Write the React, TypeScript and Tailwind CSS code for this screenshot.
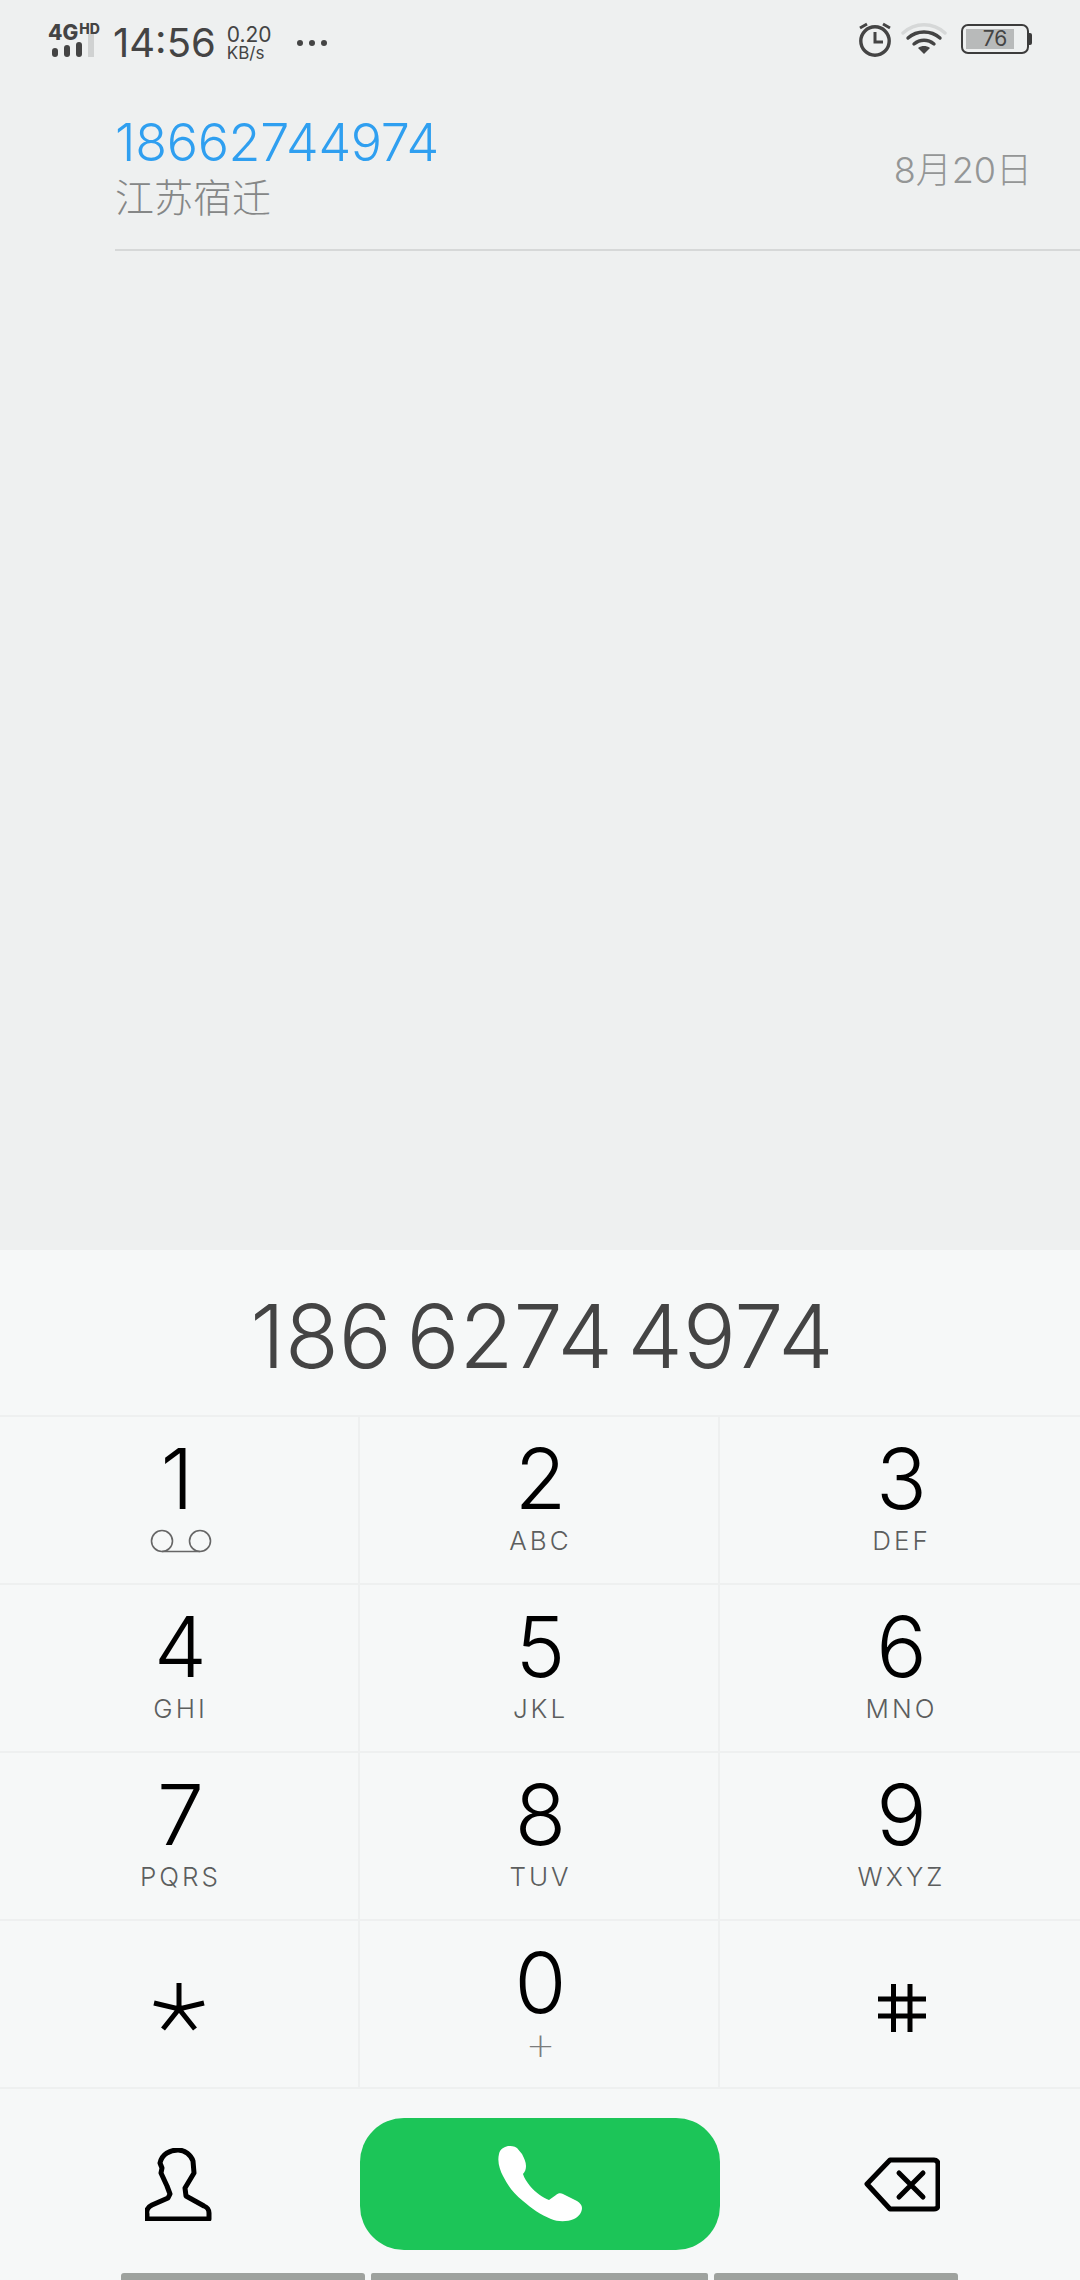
const sans = { fontFamily: '"Inter", "Noto Sans CJK SC", sans-serif' };

const keys = [
  { n: "1", l: "" },
  { n: "2", l: "ABC" },
  { n: "3", l: "DEF" },
  { n: "4", l: "GHI" },
  { n: "5", l: "JKL" },
  { n: "6", l: "MNO" },
  { n: "7", l: "PQRS" },
  { n: "8", l: "TUV" },
  { n: "9", l: "WXYZ" },
];

function Voicemail() {
  return (
    <svg width="62" height="24" viewBox="0 0 62 24" fill="none" stroke="#666" strokeWidth="1.6">
      <circle cx="12" cy="12" r="10.5" />
      <circle cx="50" cy="12" r="10.5" />
      <path d="M12 22.5h38" />
    </svg>
  );
}

function Signal() {
  return (
    <div className="mt-[3px] flex w-[52px] flex-col text-[#444]">
      <div className="flex h-[17px] items-start">
        <span className="text-[21px] leading-[17px] font-extrabold">4G</span>
        <span className="ml-[1px] text-[14px] leading-[10px] font-extrabold">HD</span>
      </div>
      <div className="mt-[-7px] flex h-[23px] items-end gap-[6px] pl-[4px]">
        <div className="h-[9px] w-[6px] rounded-[3px] bg-[#444]" />
        <div className="h-[12px] w-[6px] rounded-[3px] bg-[#444]" />
        <div className="h-[15px] w-[6px] rounded-[3px] bg-[#444]" />
        <div className="h-[23px] w-[6px] bg-[#d0d2d2]" />
      </div>
    </div>
  );
}

function Alarm() {
  return (
    <svg width="34" height="36" viewBox="0 0 34 36" fill="none" stroke="#444" strokeWidth="3.4">
      <circle cx="17" cy="20" r="14.2" />
      <path d="M17 11v10h8" strokeWidth="3" />
      <path d="M2 7l7-4M32 7l-7-4" strokeWidth="3" />
    </svg>
  );
}

function Wifi() {
  return (
    <svg width="46" height="34" viewBox="0 0 46 34" fill="none" strokeLinecap="round">
      <path d="M2 11C14 0 32 0 44 11" stroke="#d6d8d8" strokeWidth="3.4" />
      <path d="M7 16c9-8 23-8 32 0" stroke="#444" strokeWidth="3.4" />
      <path d="M13 22c6-5 14-5 20 0" stroke="#444" strokeWidth="3.4" />
      <path d="M17 26c4-2.6 8-2.6 12 0l-6 6z" fill="#444" />
    </svg>
  );
}

function Battery() {
  return (
    <div className="flex items-center">
      <div className="relative flex h-[30px] w-[68px] items-center rounded-[7px] border-[2px] border-[#3c3c3c] pl-[3px]">
        <div className="h-[20px] w-[48px] bg-[#b8baba]" />
        <span className="absolute inset-0 text-center text-[21px] leading-[26px] text-[#444]">76</span>
      </div>
      <div className="h-[12px] w-[3px] rounded-r-[2px] bg-[#3c3c3c]" />
    </div>
  );
}

function StatusBar() {
  return (
    <div className="flex h-[84px] items-start pt-[21px] pr-[48px] pl-[48px]">
      <Signal />
      <span className="ml-[13px] text-[40px] leading-[44px] text-[#444]">14:56</span>
      <div className="mt-[3px] ml-[11px] flex flex-col text-[#444]">
        <span className="text-[21px] leading-[21px]">0.20</span>
        <span className="text-[17px] leading-[17px]">KB/s</span>
      </div>
      <div className="mt-[19px] ml-[25px] flex gap-[6px]">
        <div className="h-[6px] w-[6px] rounded-full bg-[#444]" />
        <div className="h-[6px] w-[6px] rounded-full bg-[#444]" />
        <div className="h-[6px] w-[6px] rounded-full bg-[#444]" />
      </div>
      <div className="ml-auto flex items-center gap-[9px]">
        <Alarm />
        <Wifi />
        <div className="ml-[5px]">
          <Battery />
        </div>
      </div>
    </div>
  );
}

function ContactRow() {
  return (
    <div className="ml-[115px] flex h-[167px] items-center border-b-2 border-[#d6d8d8] pr-[48px]">
      <div className="flex flex-col">
        <span className="mt-[2px] text-[52px] leading-[56px] font-light tracking-[-0.3px] text-[#2f9ff0]">18662744974</span>
        <span className="mt-[4px] text-[39px] leading-[46px] font-light text-[#858787]">江苏宿迁</span>
      </div>
      <span className="mt-[6px] ml-auto text-[36px] leading-[44px] font-light text-[#949696]">8月20日</span>
    </div>
  );
}

function Key({ n, l, last }: { n: string; l: string; last: boolean }) {
  return (
    <div className={`flex h-[166px] flex-col items-center pl-[3px] ${last ? "" : "border-r-2 border-[#eef0f0]"}`}>
      <span className={`mt-[28px] text-[84px] leading-[68px] font-light text-black ${n === "1" ? "mr-[7px]" : ""}`}>{n}</span>
      <div className="mt-[16px] flex h-[24px] items-center">
        {n === "1" ? (
          <Voicemail />
        ) : n === "0" ? (
          <span className="font-['DejaVu_Sans'] text-[34px] leading-[24px] font-extralight text-[#7a7c7c]">{l}</span>
        ) : (
          <span className="text-[26px] leading-[24px] font-light tracking-[3px] text-[#5c5e5e]">{l}</span>
        )}
      </div>
    </div>
  );
}

export default function App() {
  return (
    <div style={sans} className="flex h-[2280px] w-[1080px] flex-col overflow-hidden bg-[#eef0f0]">
      <StatusBar />
      <ContactRow />
      <div className="flex-1" />

      {/* dial panel */}
      <div className="flex flex-col bg-[#f6f8f8]">
        <div className="flex h-[165px] items-center justify-center pt-[6px] pl-[4px]">
          <span className="text-[88px] leading-[100px] font-light [word-spacing:-10px] text-[#444]">186 6274 4974</span>
        </div>
        <div className="border-t-2 border-[#eef0f0]">
          {[0, 3, 6].map((start) => (
            <div key={start} className="grid grid-cols-3 border-b-2 border-[#eef0f0]">
              {keys.slice(start, start + 3).map((k, i) => (
                <Key key={k.n} n={k.n} l={k.l} last={i === 2} />
              ))}
            </div>
          ))}
          <div className="grid grid-cols-3 border-b-2 border-[#eef0f0]">
            <div className="flex h-[166px] items-center justify-center border-r-2 border-[#eef0f0]">
              <svg className="mt-[10px]" width="56" height="52" viewBox="0 0 56 52" fill="none" stroke="#000" strokeWidth="5">
                <path d="M28 0v26M3 20l25 6 25-6M12 46l16-20 16 20" />
              </svg>
            </div>
            <Key n="0" l="+" last={false} />
            <div className="flex h-[166px] items-center justify-center pl-[4px]">
              <svg className="mt-[8px]" width="48" height="48" viewBox="0 0 48 48" fill="none" stroke="#000" strokeWidth="5">
                <path d="M15.5 0v48M32 0v48M0 15h48M0 32h48" />
              </svg>
            </div>
          </div>
        </div>

        {/* call row */}
        <div className="grid grid-cols-3 pt-[29px]">
          <div className="flex h-[132px] items-center justify-center pr-[3px]">
            <svg width="67" height="73" viewBox="25 17 67 73" fill="none" stroke="#000" strokeWidth="5" strokeLinejoin="round">
              <path d="M58 19c-8 0-16 4-18 13l2 5-1 5 6 13 3 8-2 4-16 7c-4 2-6 5-5 9v5h62v-6c0-3-2-6-5-7l-18-10-1-8 9-15-1-12c-2-6-8-11-15-11z" />
            </svg>
          </div>
          <div className="flex h-[132px] items-center justify-center rounded-[44px] bg-[#1cc558]">
            <svg width="88" height="80" viewBox="36 44 88 80" fill="#fff">
              <path d="M48 46c-4 1-8 3-9 8-2 8 1 16 4 22 5 10 11 18 20 25 8 7 18 14 28 18 7 3 16 3 23 0 4-2 8-6 8-11 0-3-2-5-5-7l-14-7c-2-1-5-1-7 1l-7 5c-6-2-14-8-19-14-3-4-6-8-7-12 2-2 3-5 3-8 0-4-2-8-4-12l-5-6c-3-2-6-2-9-2z" />
            </svg>
          </div>
          <div className="flex h-[132px] items-center justify-center pl-[3px]">
            <svg width="76" height="55" viewBox="24 26 76 55" fill="none" stroke="#000" strokeWidth="5" strokeLinecap="round" strokeLinejoin="round">
              <path d="M27 53l23-24h44c3 0 4 2 4 4v41c0 3-1 4-4 4H50z" />
              <path d="M59 42l24 24M83 42L59 66" />
            </svg>
          </div>
        </div>

        {/* nav handle */}
        <div className="mt-[23px] flex h-[7px] gap-[6px] pl-[121px]">
          <div className="w-[244px] rounded-t-[3px] bg-[#9ea29e]" />
          <div className="w-[337px] rounded-t-[2px] bg-[#9ea29e]" />
          <div className="w-[244px] rounded-t-[3px] bg-[#9ea29e]" />
        </div>
      </div>
    </div>
  );
}
